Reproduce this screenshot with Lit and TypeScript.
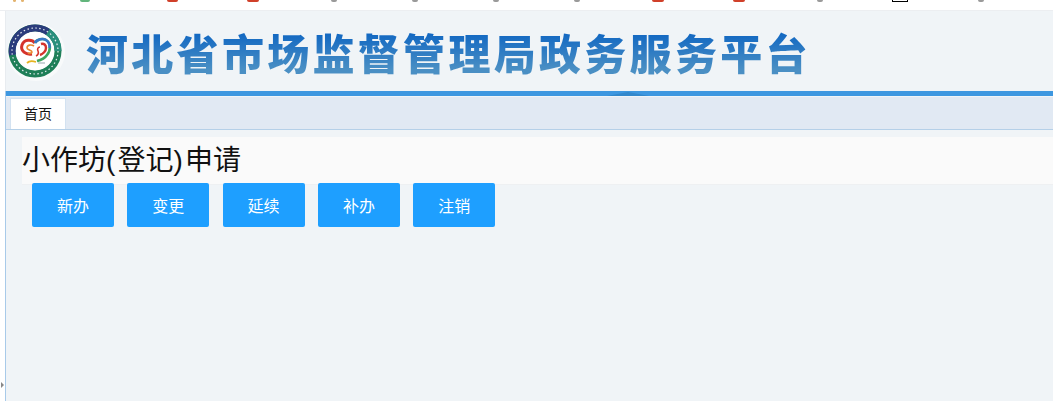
import { LitElement, html, css, svg } from "lit";
import { customElement } from "lit/decorators.js";

const BITS: [number, number, string][] = [
  [13, 3, "#e3b36e"], [21, 3, "#e3b36e"], [80, 10, "#62b57c"], [167, 11, "#d0402a"], [247, 12, "#d0402a"], [331, 6, "#9a9a9a"],
  [412, 6, "#9a9a9a"], [493, 6, "#9a9a9a"], [574, 6, "#9a9a9a"], [652, 12, "#d0402a"], [733, 12, "#d0402a"], [817, 6, "#9a9a9a"], [978, 6, "#9a9a9a"],
];

@customElement("app-root")
export class AppRoot extends LitElement {
  static styles = css`
    :host { display: block; width: 1053px; height: 401px; overflow: hidden; background: #fff; font-family: "Liberation Sans", "Noto Sans CJK SC", sans-serif; }
    .top { height: 11px; position: relative; border-bottom: 1px solid #eceef1; box-sizing: border-box; }
    .bit { position: absolute; top: 0; height: 2px; border-radius: 0 0 3px 3px; }
    .box { position: absolute; top: 0; left: 892px; width: 14px; height: 1px; border: 1px solid #000; border-top: 0; background: #fff; }
    .frame { display: flex; height: 390px; }
    .rail { width: 5px; background: #fff; position: relative; flex: none; }
    .handle { position: absolute; left: 1px; top: 371px; width: 0; height: 0; border-left: 3px solid #888; border-top: 3px solid transparent; border-bottom: 3px solid transparent; }
    .seam { width: 1px; flex: none; background: linear-gradient(#e8ecf0 80px, #a8cae9 80px); }
    .main { flex: 1; min-width: 0; background: #f0f4f7; display: flex; flex-direction: column; }
    .header { height: 80px; display: flex; align-items: center; gap: 21px; padding: 2px 0 0 1px; box-sizing: border-box; }
    .logo { width: 58px; height: 58px; flex: none; }
    .title {
      font-family: "Noto Sans CJK SC", sans-serif; font-weight: 900; font-size: 42px; letter-spacing: 3.3px; line-height: 50px; white-space: nowrap;
      background: linear-gradient(180deg, #1469c2 15%, #4a8fc4 85%); -webkit-background-clip: text; background-clip: text; color: transparent;
    }
    .bar { height: 5px; background: #3d97e0; position: relative; flex: none; }
    .notch { position: absolute; left: 601px; bottom: 0; width: 42px; height: 4px; background: #3288cc; clip-path: polygon(0 100%, 50% 0, 100% 100%); }
    .tabs { height: 32px; margin-top: 1px; background: #e1e9f3; border-bottom: 1px solid #b5d0e8; padding-left: 4px; flex: none; display: flex; align-items: flex-end; }
    .tab { width: 54px; height: 30px; background: #fff; border: 1px solid #d3e2f1; border-bottom: 0; font-size: 14px; line-height: 30px; text-align: center; color: #111; }
    .content { padding: 7px 0 0 16px; flex: 1; min-height: 0; }
    .heading { height: 48px; background: #fafafa; border-bottom: 1px solid #eef0f2; font-size: 28px; line-height: 48px; color: #111; white-space: nowrap; box-sizing: border-box; }
    .paren { letter-spacing: 2.2px; }
    .actions { display: flex; gap: 13.3px; padding-left: 10px; margin-top: -2px; }
    button { width: 82px; height: 44px; border: 0; border-radius: 2px; background: #1e9fff; color: #fff; font-family: inherit; font-size: 16px; padding: 0; }
  `;

  logo() {
    return svg`<svg class="logo" viewBox="0 0 58 58" aria-hidden="true">
      <circle cx="29" cy="29" r="29" fill="#f8fafb"/>
      <circle cx="28" cy="28" r="23" fill="none" stroke="#1f7f58" stroke-width="7"/>
      <path d="M5.5 32A23 23 0 0 1 41 9" fill="none" stroke="#2b3c7c" stroke-width="7"/>
      <path d="M41 9A23 23 0 0 1 51 28" fill="none" stroke="#2a8f7c" stroke-width="7"/>
      <circle cx="28" cy="28" r="23" fill="none" stroke="#e9eef2" stroke-width="1.200" stroke-dasharray="1.500 2.500"/>
      <circle cx="28" cy="28" r="19.200" fill="#fff"/>
      <path d="M28 20c-3-4-11-4-13 2-2 6 4 10 10 9" fill="none" stroke="#d5332b" stroke-width="3"/>
      <path d="M28 20c2-4 8-5 11-3 5 3 5 10 1 15-2 3-6 5-10 6" fill="none" stroke="#3fa65f" stroke-width="2.600"/>
      <path d="M28 20c2-4 8-5 11-3 3 2 4 5 3.500 8" fill="none" stroke="#3a78c8" stroke-width="2.600"/>
      <path d="M34 21c3-1 5 1 5 4 0 3-3 6-6 7" fill="none" stroke="#d5332b" stroke-width="2.400"/>
      <path d="M27 23c-3-2-7-1-7 2 0 2 5 2 5 4 0 1-2 2-4 1" fill="none" stroke="#e8892f" stroke-width="1.600"/>
      <path d="M33 24c-2 0-3 2-2 4 1 2 0 4-2 5" fill="none" stroke="#d5332b" stroke-width="1.600"/>
      <path d="M20 40c2-2 6-2 9-1" fill="none" stroke="#e6b422" stroke-width="1.800"/>
      <path d="M31 40h7" fill="none" stroke="#b7c0c8" stroke-width="1.400"/>
    </svg>`;
  }

  render() {
    return html`
      <div class="top">
        ${BITS.map(([x, w, c]) => html`<span class="bit" style="left:${x}px;width:${w}px;background:${c}"></span>`)}
        <span class="box"></span>
      </div>
      <div class="frame">
        <div class="rail"><span class="handle"></span></div>
        <div class="seam"></div>
        <div class="main">
          <div class="header">${this.logo()}<div class="title">河北省市场监督管理局政务服务平台</div></div>
          <div class="bar"><span class="notch"></span></div>
          <div class="tabs"><div class="tab">首页</div></div>
          <div class="content">
            <div class="heading">小作坊<span class="paren">(</span>登记<span class="paren">)</span>申请</div>
            <div class="actions">
              ${["新办", "变更", "延续", "补办", "注销"].map((t) => html`<button>${t}</button>`)}
            </div>
          </div>
        </div>
      </div>
    `;
  }
}
